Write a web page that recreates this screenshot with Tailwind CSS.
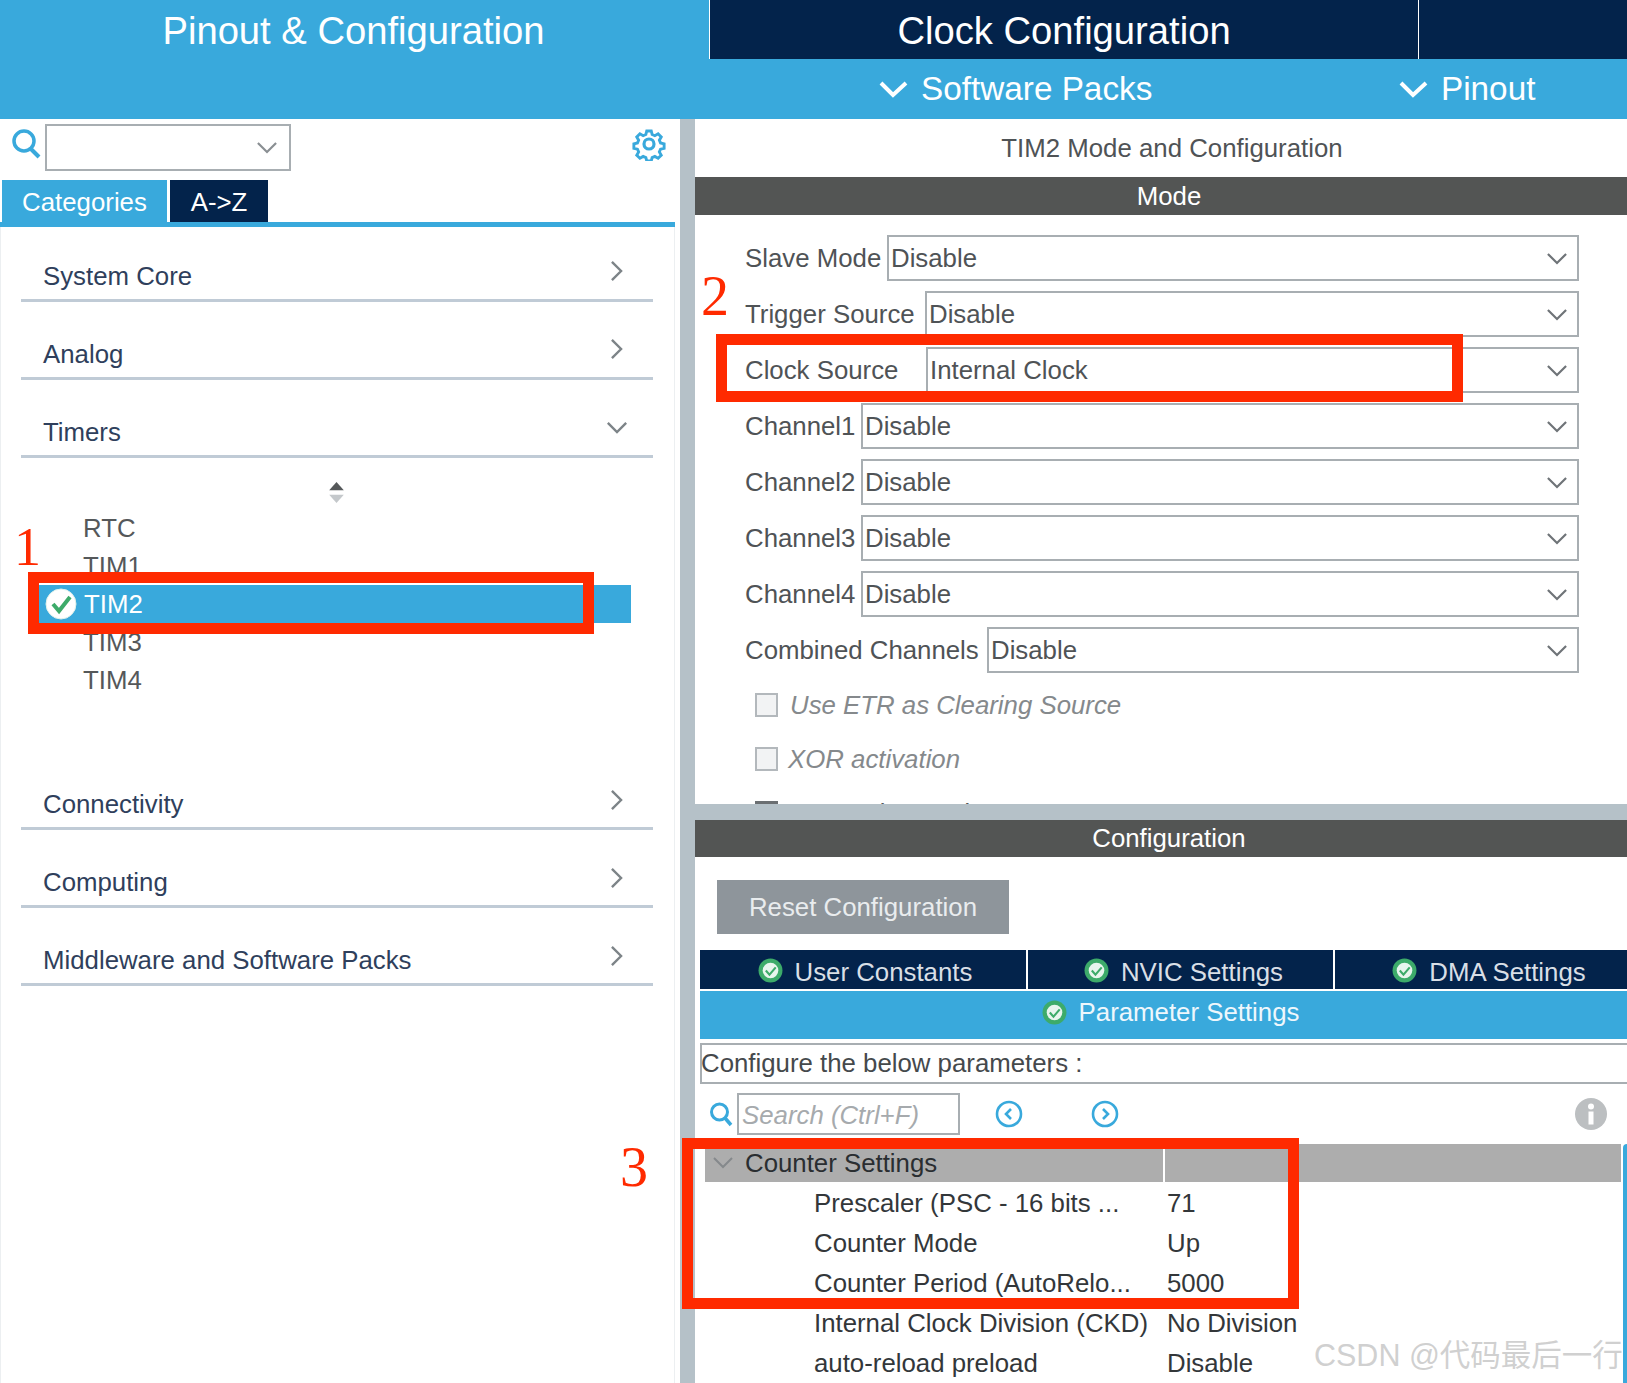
<!DOCTYPE html>
<html lang="en">
<head>
<meta charset="utf-8">
<script src="https://cdn.jsdelivr.net/npm/@tailwindcss/browser@4"></script>
<title>TIM2 Mode and Configuration</title>
</head>
<body class="bg-white">
<div class="relative w-[1627px] h-[1383px] overflow-hidden bg-white font-['Liberation_Sans',Arial,sans-serif] text-[25.8px] leading-[30px] text-[#4f5356]">

  <!-- top tabs -->
  <div class="flex h-[59px] bg-[#03234b] text-white text-[38.2px] leading-[62px]">
    <div class="w-[709px] bg-[#39a9dc] text-center pr-[2px]">Pinout &amp; Configuration</div>
    <div class="w-[710px] border-x border-white text-center">Clock Configuration</div>
    <div class="flex-1"></div>
  </div>
  <!-- second bar -->
  <div class="relative flex h-[60px] bg-[#39a9dc] text-white text-[33.3px] leading-[62px]">
    <div class="ml-[879px] flex items-center w-[520px]">
      <svg class="w-[30px] h-[20px] mr-[12px]" viewBox="0 0 30 20" fill="none" stroke="#fff" stroke-width="4"><path d="M2 4l12 12L27 4"/></svg>
      <span>Software Packs</span>
    </div>
    <div class="flex items-center">
      <svg class="w-[30px] h-[20px] mr-[12px]" viewBox="0 0 30 20" fill="none" stroke="#fff" stroke-width="4"><path d="M2 4l12 12L27 4"/></svg>
      <span>Pinout</span>
    </div>
  </div>

  <div class="flex h-[1264px]">
    <!-- left panel -->
    <div class="w-[680px] shrink-0 flex flex-col">
      <div class="flex items-start h-[61px] pt-[5px]">
        <svg class="w-[30px] h-[32px] ml-[11px] mt-[3px] mr-[4px]" viewBox="0 0 30 32" fill="none" stroke="#39a9dc" stroke-width="3.5"><circle cx="13" cy="14" r="10"/><path d="M20 22l8 8" stroke-width="4"/></svg>
        <div class="w-[246px] h-[47px] border-2 border-[#a8aeb2] flex items-center justify-end pr-[12px]">
          <svg class="w-[20px] h-[13px]" viewBox="0 0 22 14" fill="none" stroke="#8a8f93" stroke-width="2.4"><path d="M1 2l10 10L21 2"/></svg>
        </div>
        <svg class="w-[34px] h-[34px] ml-auto mr-[14px] mt-[3px]" viewBox="0 0 34 34" fill="none" stroke="#39a9dc" stroke-width="3.2"><circle cx="17" cy="17" r="5"/><path d="M14.5 2.5h5l1 4 3 1.3 3.6-2.1 3.5 3.5-2.1 3.6 1.3 3 4 1v5l-4 1-1.3 3 2.1 3.6-3.5 3.5-3.6-2.1-3 1.3-1 3.7h-5l-1-3.7-3-1.3-3.6 2.1-3.500-3.500 2.100-3.600-1.300-3-4-1v-5l4-1 1.300-3-2.100-3.600 3.500-3.500 3.600 2.100 3-1.300z" transform="translate(1.700 1.700) scale(.9)"/></svg>
      </div>
      <div class="flex h-[42px] pl-[2px] text-white">
        <div class="w-[165px] bg-[#39a9dc] text-center leading-[44px]">Categories</div>
        <div class="w-[98px] ml-[3px] bg-[#03234b] text-center leading-[44px]">A-&gt;Z</div>
      </div>
      <div class="w-[675px] h-[5px] bg-[#39a9dc]"></div>

      <div class="flex-1 w-[675px] border-x border-[#eceff1] flex flex-col text-[#2f3f5c]">
        <div class="ml-[20px] w-[632px] h-[75px] border-b-[3px] border-[#c0cbd6] flex items-end justify-between pb-[8px] pl-[22px] pr-[30px]">
          <span>System Core</span>
          <svg class="w-[13px] h-[22px] mb-[9px]" viewBox="0 0 14 24" fill="none" stroke="#7d8488" stroke-width="2.6"><path d="M2 2l10 10L2 22"/></svg>
        </div>
        <div class="ml-[20px] w-[632px] h-[78px] border-b-[3px] border-[#c0cbd6] flex items-end justify-between pb-[8px] pl-[22px] pr-[30px]">
          <span>Analog</span>
          <svg class="w-[13px] h-[22px] mb-[9px]" viewBox="0 0 14 24" fill="none" stroke="#7d8488" stroke-width="2.6"><path d="M2 2l10 10L2 22"/></svg>
        </div>
        <div class="ml-[20px] w-[632px] h-[78px] border-b-[3px] border-[#c0cbd6] flex items-end justify-between pb-[8px] pl-[22px] pr-[25px]">
          <span>Timers</span>
          <svg class="w-[22px] h-[13px] mb-[13px]" viewBox="0 0 24 14" fill="none" stroke="#7d8488" stroke-width="2.6"><path d="M2 2l10 10L22 2"/></svg>
        </div>

        <div class="h-[294px] text-[#55585a]">
          <div class="flex justify-center w-[670px] pt-[24px] h-[51px]">
            <svg class="w-[15px] h-[21px]" viewBox="0 0 16 23"><path d="M8 0l8 9H0z" fill="#55585a"/><path d="M8 23l8-9H0z" fill="#c4c8cb"/></svg>
          </div>
          <div class="pl-[82px] h-[38px] leading-[38px]">RTC</div>
          <div class="pl-[82px] h-[38px] leading-[38px]">TIM1</div>
          <div class="ml-[37px] w-[593px] h-[38px] bg-[#39a9dc] text-white flex items-center leading-[38px]">
            <svg class="w-[32px] h-[32px] ml-[7px] mr-[7px]" viewBox="0 0 32 32"><circle cx="16" cy="16" r="15" fill="#fff" stroke="#dff1ea"/><path d="M8 16l6 7L25 9" fill="none" stroke="#3dab6a" stroke-width="4"/></svg>
            <span>TIM2</span>
          </div>
          <div class="pl-[82px] h-[38px] leading-[38px]">TIM3</div>
          <div class="pl-[82px] h-[38px] leading-[38px]">TIM4</div>
        </div>

        <div class="ml-[20px] w-[632px] h-[78px] border-b-[3px] border-[#c0cbd6] flex items-end justify-between pb-[8px] pl-[22px] pr-[30px]">
          <span>Connectivity</span>
          <svg class="w-[13px] h-[22px] mb-[8px]" viewBox="0 0 14 24" fill="none" stroke="#7d8488" stroke-width="2.6"><path d="M2 2l10 10L2 22"/></svg>
        </div>
        <div class="ml-[20px] w-[632px] h-[78px] border-b-[3px] border-[#c0cbd6] flex items-end justify-between pb-[8px] pl-[22px] pr-[30px]">
          <span>Computing</span>
          <svg class="w-[13px] h-[22px] mb-[8px]" viewBox="0 0 14 24" fill="none" stroke="#7d8488" stroke-width="2.6"><path d="M2 2l10 10L2 22"/></svg>
        </div>
        <div class="ml-[20px] w-[632px] h-[78px] border-b-[3px] border-[#c0cbd6] flex items-end justify-between pb-[8px] pl-[22px] pr-[30px]">
          <span>Middleware and Software Packs</span>
          <svg class="w-[13px] h-[22px] mb-[8px]" viewBox="0 0 14 24" fill="none" stroke="#7d8488" stroke-width="2.6"><path d="M2 2l10 10L2 22"/></svg>
        </div>
      </div>
    </div>

    <!-- vertical splitter -->
    <div class="w-[15px] shrink-0 bg-[#b5c1c8]"></div>

    <!-- right column -->
    <div class="flex-1 min-w-0 flex flex-col">
      <!-- mode pane -->
      <div class="h-[685px] overflow-hidden">
        <div class="h-[58px] leading-[58px] text-center pl-[22px] text-[#4f5356]">TIM2 Mode and Configuration</div>
        <div class="h-[38px] leading-[38px] bg-[#535554] text-white text-center pl-[16px]">Mode</div>
        <div class="pl-[50px] pr-[48px] pt-[20px] flex flex-col gap-[10px]">
          <div class="flex h-[46px] items-center">
            <span class="w-[142px]">Slave Mode</span>
            <div class="flex-1 h-full border-2 border-[#a8aeb2] flex items-center justify-between pl-[2px] pr-[10px]"><span>Disable</span><svg class="w-[20px] h-[13px]" viewBox="0 0 22 14" fill="none" stroke="#6f7478" stroke-width="2.4"><path d="M1 2l10 10L21 2"/></svg></div>
          </div>
          <div class="flex h-[46px] items-center">
            <span class="w-[180px]">Trigger Source</span>
            <div class="flex-1 h-full border-2 border-[#a8aeb2] flex items-center justify-between pl-[2px] pr-[10px]"><span>Disable</span><svg class="w-[20px] h-[13px]" viewBox="0 0 22 14" fill="none" stroke="#6f7478" stroke-width="2.4"><path d="M1 2l10 10L21 2"/></svg></div>
          </div>
          <div class="flex h-[46px] items-center">
            <span class="w-[181px]">Clock Source</span>
            <div class="flex-1 h-full border-2 border-[#a8aeb2] flex items-center justify-between pl-[2px] pr-[10px]"><span>Internal Clock</span><svg class="w-[20px] h-[13px]" viewBox="0 0 22 14" fill="none" stroke="#6f7478" stroke-width="2.4"><path d="M1 2l10 10L21 2"/></svg></div>
          </div>
          <div class="flex h-[46px] items-center">
            <span class="w-[116px]">Channel1</span>
            <div class="flex-1 h-full border-2 border-[#a8aeb2] flex items-center justify-between pl-[2px] pr-[10px]"><span>Disable</span><svg class="w-[20px] h-[13px]" viewBox="0 0 22 14" fill="none" stroke="#6f7478" stroke-width="2.4"><path d="M1 2l10 10L21 2"/></svg></div>
          </div>
          <div class="flex h-[46px] items-center">
            <span class="w-[116px]">Channel2</span>
            <div class="flex-1 h-full border-2 border-[#a8aeb2] flex items-center justify-between pl-[2px] pr-[10px]"><span>Disable</span><svg class="w-[20px] h-[13px]" viewBox="0 0 22 14" fill="none" stroke="#6f7478" stroke-width="2.4"><path d="M1 2l10 10L21 2"/></svg></div>
          </div>
          <div class="flex h-[46px] items-center">
            <span class="w-[116px]">Channel3</span>
            <div class="flex-1 h-full border-2 border-[#a8aeb2] flex items-center justify-between pl-[2px] pr-[10px]"><span>Disable</span><svg class="w-[20px] h-[13px]" viewBox="0 0 22 14" fill="none" stroke="#6f7478" stroke-width="2.4"><path d="M1 2l10 10L21 2"/></svg></div>
          </div>
          <div class="flex h-[46px] items-center">
            <span class="w-[116px]">Channel4</span>
            <div class="flex-1 h-full border-2 border-[#a8aeb2] flex items-center justify-between pl-[2px] pr-[10px]"><span>Disable</span><svg class="w-[20px] h-[13px]" viewBox="0 0 22 14" fill="none" stroke="#6f7478" stroke-width="2.4"><path d="M1 2l10 10L21 2"/></svg></div>
          </div>
          <div class="flex h-[46px] items-center">
            <span class="w-[242px]">Combined Channels</span>
            <div class="flex-1 h-full border-2 border-[#a8aeb2] flex items-center justify-between pl-[2px] pr-[10px]"><span>Disable</span><svg class="w-[20px] h-[13px]" viewBox="0 0 22 14" fill="none" stroke="#6f7478" stroke-width="2.4"><path d="M1 2l10 10L21 2"/></svg></div>
          </div>
        </div>
        <div class="pl-[60px] pt-[5px] italic text-[#85898c] flex flex-col">
          <div class="flex items-center h-[54px] gap-[12px]"><span class="w-[23px] h-[24px] border-2 border-[#b3b8bc] bg-[#f2f3f4]"></span><span>Use ETR as Clearing Source</span></div>
          <div class="flex items-center h-[54px] gap-[10px]"><span class="w-[23px] h-[24px] border-2 border-[#b3b8bc] bg-[#f2f3f4]"></span><span>XOR activation</span></div>
          <div class="flex items-center h-[54px] gap-[12px]"><span class="w-[23px] h-[24px] border-2 border-[#6b6f72] bg-[#6b6f72]"></span><span class="text-[#55585a]">One Pulse Mode</span></div>
        </div>
      </div>
      <!-- horizontal splitter -->
      <div class="h-[16px] shrink-0 bg-[#b5c1c8]"></div>

      <!-- configuration pane -->
      <div class="flex-1 min-h-0 overflow-hidden flex flex-col">
        <div class="h-[37px] shrink-0 leading-[37px] bg-[#535554] text-white text-center pl-[16px]">Configuration</div>
        <div class="ml-[22px] mt-[23px] w-[292px] h-[54px] shrink-0 bg-[#8e959b] text-[#e9ecee] leading-[54px] text-center">Reset Configuration</div>

        <div class="ml-[5px] mt-[16px] shrink-0 flex gap-[2px] h-[39px] text-[#d9dfe6]">
          <div class="w-[326px] bg-[#03234b] flex items-center justify-center pt-[4px] pl-[4px]">
            <svg class="w-[25px] h-[25px] mr-[12px] -mt-[3px]" viewBox="0 0 24 24"><circle cx="12" cy="12" r="11.500" fill="#3dab6a"/><circle cx="12" cy="12" r="7.500" fill="#e8f5ee"/><path d="M7.500 12l3.500 4 6-7" fill="none" stroke="#3dab6a" stroke-width="2"/></svg>
            <span>User Constants</span>
          </div>
          <div class="w-[305px] bg-[#03234b] flex items-center justify-center pt-[4px] pl-[6px]">
            <svg class="w-[25px] h-[25px] mr-[12px] -mt-[3px]" viewBox="0 0 24 24"><circle cx="12" cy="12" r="11.500" fill="#3dab6a"/><circle cx="12" cy="12" r="7.500" fill="#e8f5ee"/><path d="M7.500 12l3.500 4 6-7" fill="none" stroke="#3dab6a" stroke-width="2"/></svg>
            <span>NVIC Settings</span>
          </div>
          <div class="flex-1 bg-[#03234b] flex items-center justify-center pt-[4px] pl-[16px]">
            <svg class="w-[25px] h-[25px] mr-[12px] -mt-[3px]" viewBox="0 0 24 24"><circle cx="12" cy="12" r="11.500" fill="#3dab6a"/><circle cx="12" cy="12" r="7.500" fill="#e8f5ee"/><path d="M7.500 12l3.500 4 6-7" fill="none" stroke="#3dab6a" stroke-width="2"/></svg>
            <span>DMA Settings</span>
          </div>
        </div>
        <div class="ml-[5px] mt-[2px] h-[48px] shrink-0 bg-[#39a9dc] text-[#eef7fc] flex items-center justify-center pb-[6px] pl-[14px]">
          <svg class="w-[25px] h-[25px] mr-[12px]" viewBox="0 0 24 24"><circle cx="12" cy="12" r="11.500" fill="#3dab6a"/><circle cx="12" cy="12" r="7.500" fill="#e8f5ee"/><path d="M7.500 12l3.500 4 6-7" fill="none" stroke="#3dab6a" stroke-width="2"/></svg>
          <span>Parameter Settings</span>
        </div>
        <div class="ml-[5px] mt-[4px] h-[41px] shrink-0 border-2 border-r-0 border-[#a8aeb2] -indent-[1px] leading-[36px] text-[#45494c]">Configure the below parameters :</div>

        <div class="flex items-center h-[42px] mt-[9px] shrink-0">
          <svg class="w-[24px] h-[26px] ml-[14px] mr-[4px]" viewBox="0 0 24 26" fill="none" stroke="#39a9dc" stroke-width="3"><circle cx="10.500" cy="11" r="8"/><path d="M16 17l6 7" stroke-width="3.500"/></svg>
          <div class="w-[223px] h-[42px] border-2 border-[#a8aeb2] pl-[3px] leading-[40px] italic text-[#a6aaad]">Search (Ctrl+F)</div>
          <svg class="w-[28px] h-[28px] ml-[35px]" viewBox="0 0 28 28" fill="none" stroke="#39a9dc" stroke-width="2.600"><circle cx="14" cy="14" r="12"/><path d="M16 9l-5 5 5 5"/></svg>
          <svg class="w-[28px] h-[28px] ml-[68px]" viewBox="0 0 28 28" fill="none" stroke="#39a9dc" stroke-width="2.600"><circle cx="14" cy="14" r="12"/><path d="M12 9l5 5-5 5"/></svg>
          <svg class="w-[32px] h-[32px] ml-auto mr-[20px]" viewBox="0 0 32 32"><circle cx="16" cy="16" r="16" fill="#bcbfc1"/><circle cx="16" cy="8.500" r="3" fill="#fff"/><rect x="13.500" y="13.500" width="5" height="13" fill="#fff"/></svg>
        </div>

        <div class="flex mt-[9px] flex-1 min-h-0 pl-[10px]">
          <div class="w-[916px] shrink-0 text-[#33373a]">
            <div class="flex h-[38px] bg-[#adadad] leading-[38px]">
              <div class="w-[460px] border-r-2 border-white flex items-center text-[#2a2e31]">
                <svg class="w-[20px] h-[12px] ml-[8px] mr-[12px]" viewBox="0 0 20 12" fill="none" stroke="#85898c" stroke-width="2"><path d="M1 1l9 9 9-9"/></svg>
                <span>Counter Settings</span>
              </div>
            </div>
            <div class="flex h-[40px] leading-[42px]"><span class="w-[462px] pl-[109px]">Prescaler (PSC - 16 bits ...</span><span>71</span></div>
            <div class="flex h-[40px] leading-[42px]"><span class="w-[462px] pl-[109px]">Counter Mode</span><span>Up</span></div>
            <div class="flex h-[40px] leading-[42px]"><span class="w-[462px] pl-[109px]">Counter Period (AutoRelo...</span><span>5000</span></div>
            <div class="flex h-[40px] leading-[42px]"><span class="w-[462px] pl-[109px]">Internal Clock Division (CKD)</span><span>No Division</span></div>
            <div class="flex h-[40px] leading-[42px]"><span class="w-[462px] pl-[109px]">auto-reload preload</span><span>Disable</span></div>
          </div>
          <div class="ml-[2px] flex-1 bg-[#39a9dc] rounded-tl-[4px]"></div>
        </div>
      </div>
    </div>
  </div>

  <!-- red annotation boxes drawn over the picture -->
  <div class="absolute left-[28px] top-[572px] w-[566px] h-[62px] border-[11px] border-[#ff2a00]"></div>
  <div class="absolute left-[716px] top-[334px] w-[747px] h-[68px] border-[11px] border-[#ff2a00]"></div>
  <div class="absolute left-[682px] top-[1138px] w-[617px] h-[171px] border-[11px] border-[#ff2a00]"></div>
  <span class="absolute left-[14px] top-[514px] font-['Liberation_Serif',serif] text-[54px] leading-[66px] text-[#ff2a00]">1</span>
  <span class="absolute left-[701px] top-[263px] font-['Liberation_Serif',serif] text-[56px] leading-[66px] text-[#ff2a00]">2</span>
  <span class="absolute left-[620px] top-[1134px] font-['Liberation_Serif',serif] text-[56px] leading-[66px] text-[#ff2a00]">3</span>
  <!-- watermark -->
  <span class="absolute left-[1314px] top-[1336px] whitespace-nowrap font-['Liberation_Sans','Noto_Sans_CJK_SC',sans-serif] text-[30.5px] leading-[38px] text-[#c4c4c4]/80">CSDN @代码最后一行</span>
</div>
</body>
</html>
